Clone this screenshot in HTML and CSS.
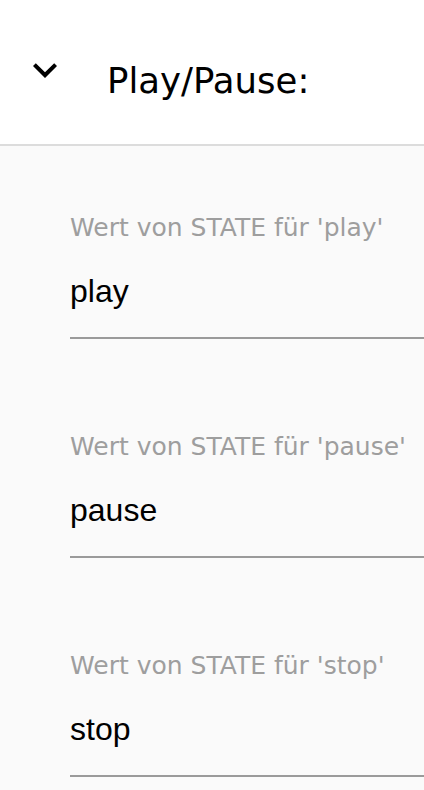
FILE: index.html
```html
<!DOCTYPE html>
<html lang="de">
<head>
    <meta charset="UTF-8">
    <meta name="viewport" content="width=device-width, initial-scale=1.0">
    <title>Play/Pause</title>
    <link rel="stylesheet" href="styles.css">
</head>
<body>
    <div class="panel-header">
        <svg class="expand-icon" viewBox="0 0 24 24" width="48" height="48">
            <path d="M16.59 8.59L12 13.17 7.41 8.59 6 10l6 6 6-6z"/>
        </svg>
        <h2 class="panel-title">Play/Pause:</h2>
    </div>

    <div class="panel-body">
        <div class="field">
            <label for="statePlay">Wert von STATE für 'play'</label>
            <input type="text" id="statePlay" value="play">
        </div>
        <div class="field">
            <label for="statePause">Wert von STATE für 'pause'</label>
            <input type="text" id="statePause" value="pause">
        </div>
        <div class="field">
            <label for="stateStop">Wert von STATE für 'stop'</label>
            <input type="text" id="stateStop" value="stop">
        </div>
    </div>
</body>
</html>
```

FILE: styles.css
```css
body {
    margin: 0;
    background-color: #fafafa;
    font-family: "DejaVu Sans", sans-serif;
}

.panel-header {
    display: flex;
    align-items: center;
    height: 144px;
    padding-left: 21px;
    background-color: #ffffff;
    border-bottom: 2px solid #dcdcdc;
}
.expand-icon {
    flex: none;
    fill: #000000;
    margin-top: -4px;
}
.panel-title {
    margin: 0 0 0 38px;
    padding-top: 17px;
    font-size: 35.5px;
    font-weight: normal;
    line-height: 40px;
    color: #000000;
}

.panel-body {
    padding: 68px 0 0 70px;
}
.field {
    display: flex;
    flex-direction: column;
    margin-bottom: 94px;
}
.field:last-child {
    margin-bottom: 0;
}
label {
    font-size: 25px;
    line-height: 28px;
    color: #9e9e9e;
}
input {
    margin-top: 31px;
    padding: 0 0 28px 0;
    border: none;
    border-bottom: 2px solid #9a9a9a;
    background: transparent;
    font-family: "Liberation Sans", Arial, sans-serif;
    font-size: 32px;
    line-height: 36px;
    height: 36px;
    box-sizing: content-box;
    color: #000000;
    outline: none;
}
```
